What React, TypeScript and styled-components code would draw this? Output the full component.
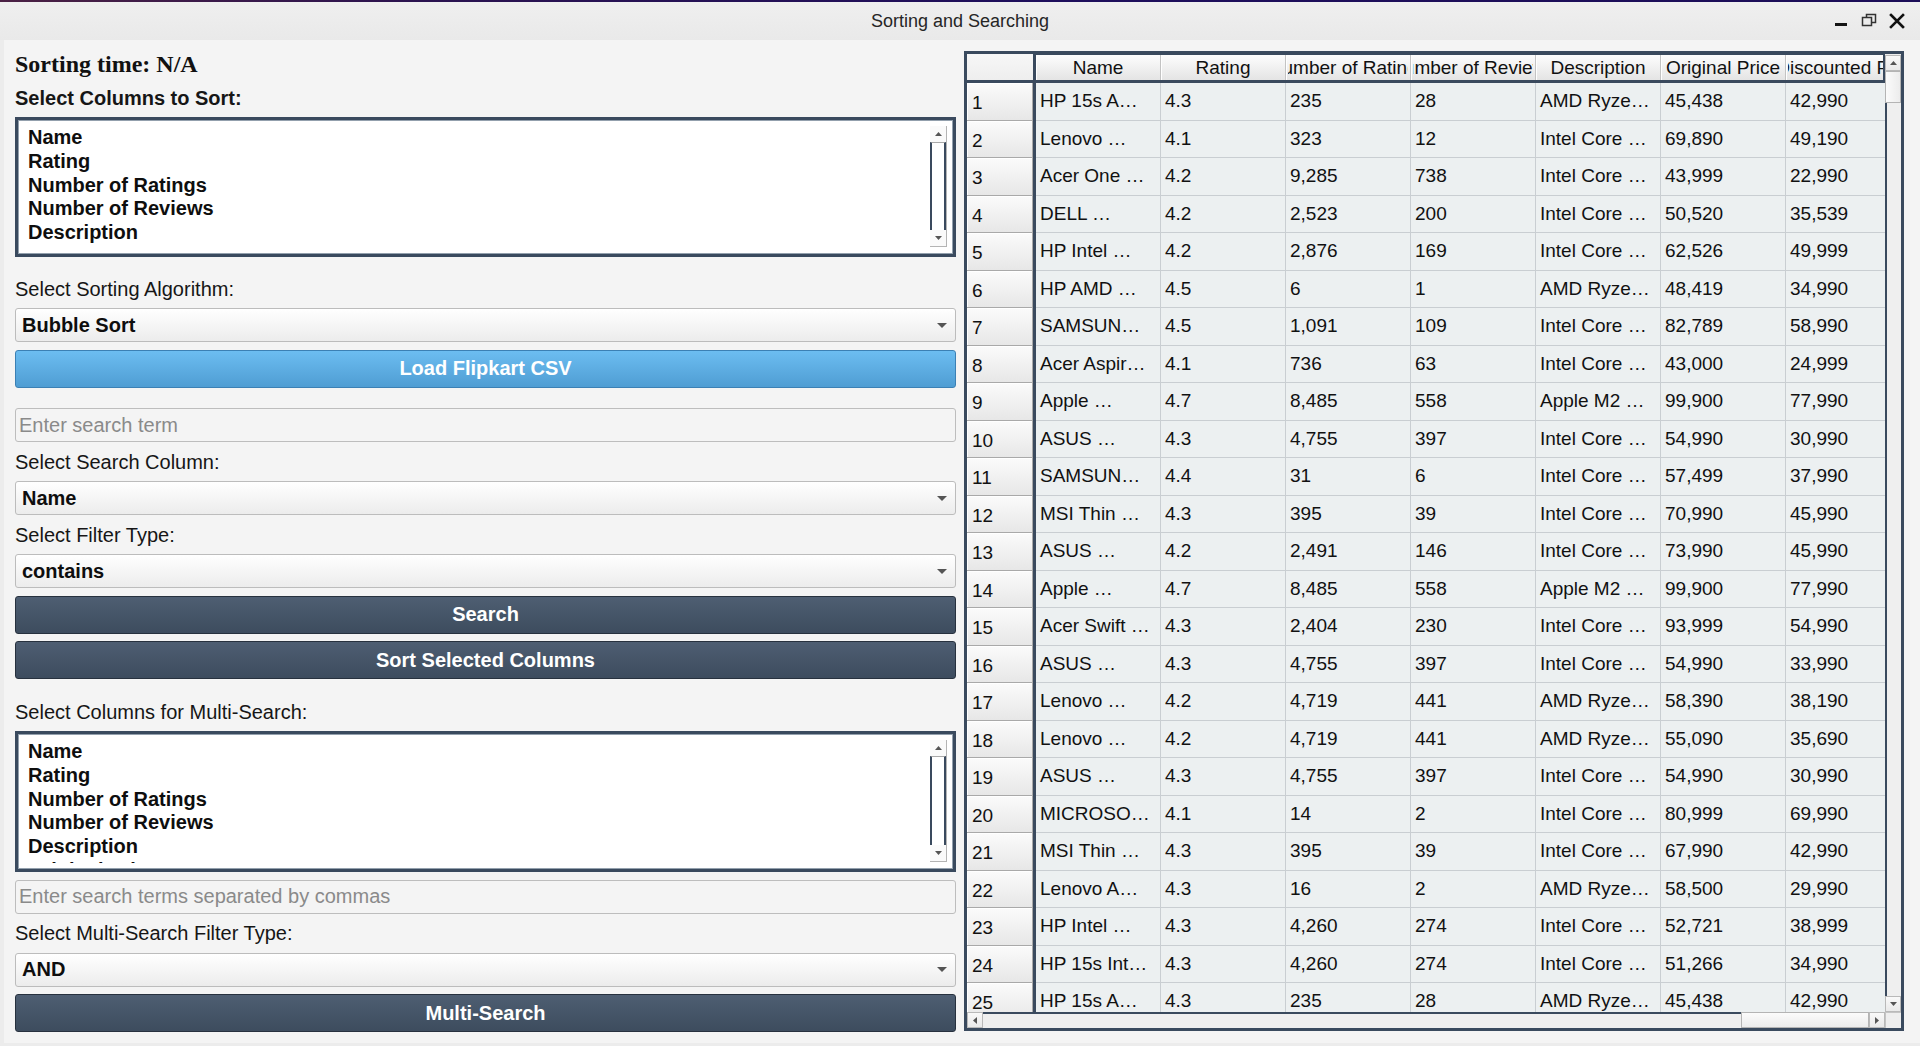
import React from 'react';
import styled, { createGlobalStyle } from 'styled-components';

const DARK = '#3a4a5e';
const SANS = '"Liberation Sans", Arial, Helvetica, sans-serif';

const GlobalStyle = createGlobalStyle`
  html, body { margin: 0; padding: 0; }
  body { background: #f4f4f4; font-family: ${SANS}; color: #111; }
  *, *::before, *::after { box-sizing: border-box; }
`;

const Window = styled.div`
  width: 1920px;
  height: 1046px;
  display: flex;
  flex-direction: column;
  background: #f4f4f4;
  overflow: hidden;
`;

const Accent = styled.div`
  height: 2px;
  flex: none;
  background: linear-gradient(90deg, #4b2144 0%, #2b1350 22%, #1e0f5c 55%, #1c0e58 100%);
`;

const TitleBar = styled.header`
  height: 38px;
  flex: none;
  display: grid;
  grid-template-columns: 1fr auto 1fr;
  align-items: center;
  background: linear-gradient(#efefef, #e9e9e9);
`;

const Title = styled.div`
  grid-column: 2;
  font-size: 18px;
  color: #262626;
`;

const Controls = styled.div`
  justify-self: end;
  display: flex;
  align-items: center;
  gap: 12px;
  padding-right: 15px;
`;

const Body = styled.div`
  flex: 1;
  display: flex;
  gap: 8px;
  padding: 0 16px 0 11px;
  border-left: 4px solid #ececec;
  border-bottom: 3px solid #ececec;
`;

const LeftPanel = styled.section`
  width: 941px;
  flex: none;
  display: flex;
  flex-direction: column;
  gap: 7.5px;
  padding-top: 10px;
`;

const SortTime = styled.div`
  font-family: "Liberation Serif", "Times New Roman", serif;
  font-weight: 700;
  font-size: 24px;
  line-height: 28px;
  color: #111;
`;

const Label = styled.div<{ $bold?: boolean; $spaced?: number }>`
  font-size: 20px;
  line-height: 24px;
  font-weight: ${(p) => (p.$bold ? 700 : 400)};
  color: #161616;
  margin-top: ${(p) => p.$spaced ?? 0}px;
`;

const ListBox = styled.div<{ $height: number }>`
  height: ${(p) => p.$height}px;
  flex: none;
  display: flex;
  border: 3px solid ${DARK};
  box-shadow: inset 0 0 0 1px #93a0ad;
  background: #fff;
  padding: 6px 5px 6px 10px;
`;

const ListViewport = styled.div`
  flex: 1;
  overflow: hidden;
`;

const ListItem = styled.div`
  font-size: 20px;
  line-height: 23.75px;
  font-weight: 700;
  color: #0e0e0e;
  white-space: nowrap;
`;

const VScrollSmall = styled.div`
  width: 17px;
  flex: none;
  display: flex;
  flex-direction: column;
  margin: 0 1px 1px 0;
  border-right: 1px solid #b4b4b4;
  border-bottom: 1px solid #b4b4b4;
`;

const SmallArrow = styled.div`
  height: 16px;
  flex: none;
  display: flex;
  align-items: center;
  justify-content: center;
  background: #fafafa;
`;

const SmallTrack = styled.div`
  flex: 1;
  background: #fff;
  border-top: 1px solid #a9a9a9;
  border-left: 2px solid ${DARK};
  border-right: 2px solid ${DARK};
`;

const Combo = styled.div`
  height: 34px;
  flex: none;
  display: flex;
  align-items: center;
  justify-content: space-between;
  padding: 0 8px 0 6px;
  border: 1px solid #bcbcbc;
  border-radius: 3px;
  background: linear-gradient(#ffffff, #ececec);
  font-size: 20px;
  font-weight: 700;
  color: #0e0e0e;
`;

const Button = styled.button<{ $variant: 'primary' | 'dark' }>`
  height: 38px;
  flex: none;
  display: flex;
  align-items: center;
  justify-content: center;
  border-radius: 3px;
  font-family: ${SANS};
  font-size: 20px;
  font-weight: 700;
  color: #fff;
  padding: 0;
  cursor: pointer;
  border: 1px solid ${(p) => (p.$variant === 'primary' ? '#3b80b4' : '#27313e')};
  background: ${(p) =>
    p.$variant === 'primary'
      ? 'linear-gradient(#6cbdf1, #4f9dd3)'
      : 'linear-gradient(#4e5e72, #3d4c5e)'};
`;

const Input = styled.input<{ $spaced?: number }>`
  height: 34px;
  flex: none;
  width: 100%;
  border: 1px solid #bdbdbd;
  border-radius: 3px;
  background: #f4f4f4;
  padding: 0 3px;
  font-family: ${SANS};
  font-size: 20px;
  color: #111;
  outline: none;
  margin-top: ${(p) => p.$spaced ?? 0}px;
  &::placeholder { color: #8a8a8a; }
`;

/* ---------- table ---------- */

const TableFrame = styled.section`
  width: 940px;
  height: 980px;
  flex: none;
  margin-top: 11px;
  border: 3px solid ${DARK};
  display: grid;
  grid-template-columns: 1fr 16px;
  grid-template-rows: 1fr 16px;
  background: #eef0f1;
`;

const TableArea = styled.div`
  display: grid;
  grid-template-columns: 66px 1fr;
  grid-template-rows: 26px 1fr;
  gap: 3px;
  background: ${DARK};
  overflow: hidden;
`;

const CornerHead = styled.div`
  background: linear-gradient(#f7f7f7, #eeeeee);
`;

const HeaderViewport = styled.div`
  display: flex;
  align-items: flex-end;
  overflow: hidden;
  margin-right: 2px;
  background: ${DARK};
`;

const HeadCell = styled.div`
  width: 125px;
  height: 25px;
  flex: none;
  display: flex;
  padding: 0 2px;
  border-right: 1px solid #c3c3c3;
  box-shadow: inset 1px 0 0 #ffffff;
  background: linear-gradient(#fdfdfd, #e4e4e4);
`;

const HeadClip = styled.div`
  flex: 1;
  display: flex;
  justify-content: center;
  align-items: center;
  overflow: hidden;
  font-size: 19px;
  color: #111;
`;

const HeadText = styled.span`
  flex: none;
  white-space: nowrap;
`;

const RowHeads = styled.div`
  display: flex;
  flex-direction: column;
  overflow: hidden;
  background: #f1f1f1;
`;

const RowHead = styled.div`
  height: 37.5px;
  flex: none;
  display: flex;
  align-items: center;
  padding: 4px 0 0 5px;
  border-right: 1px solid #a9a9a9;
  border-bottom: 1px solid #a9a9a9;
  box-shadow: inset 1px 1px 0 #ffffff;
  background: linear-gradient(#fbfbfb, #e7e7e7);
  font-size: 19px;
  color: #111;
`;

const DataViewport = styled.div`
  overflow: hidden;
  background: #ecf0f1;
`;

const DataRow = styled.div`
  display: flex;
  height: 37.5px;
`;

const DataCell = styled.div`
  width: 125px;
  flex: none;
  display: flex;
  align-items: center;
  padding: 0 4px;
  border-right: 1px solid #c9ced2;
  border-bottom: 1px solid #c9ced2;
  background: #ecf0f1;
  font-size: 19px;
  color: #111;
  white-space: nowrap;
  overflow: hidden;
`;

const VScroll = styled.div`
  display: flex;
  flex-direction: column;
  padding-top: 1px;
  background: #eeeeee;
`;

const HScroll = styled.div`
  display: flex;
  background: #eeeeee;
`;

const ArrowBox = styled.div`
  flex: none;
  display: flex;
  align-items: center;
  justify-content: center;
  width: 16px;
  height: 16px;
  background: linear-gradient(#f9f9f9, #e9e9e9);
  border: 1px solid #b9b9b9;
`;

const Thumb = styled.div<{ $vertical?: boolean; $len: number }>`
  flex: none;
  ${(p) => (p.$vertical ? `height: ${p.$len}px;` : `width: ${p.$len}px;`)}
  background: linear-gradient(${(p) => (p.$vertical ? '90deg' : '180deg')}, #fbfbfb, #ececec);
  border: 1px solid #b4b4b4;
`;

const Trough = styled.div<{ $vertical?: boolean }>`
  flex: 1;
  background: #efefef;
  ${(p) => (p.$vertical ? `border-left: 2px solid ${DARK};` : `border-top: 2px solid ${DARK};`)}
`;

const ScrollCorner = styled.div`
  background: #eeeeee;
  border-left: 1px solid #c4c4c4;
  border-top: 1px solid #c4c4c4;
`;

/* ---------- icons ---------- */

const Tri = ({ dir, w = 7, h = 4 }: { dir: 'up' | 'down' | 'left' | 'right'; w?: number; h?: number }) => {
  const horizontal = dir === 'left' || dir === 'right';
  const W = horizontal ? h : w;
  const H = horizontal ? w : h;
  let pts = '';
  if (dir === 'up') pts = `0,${H} ${W},${H} ${W / 2},0`;
  if (dir === 'down') pts = `0,0 ${W},0 ${W / 2},${H}`;
  if (dir === 'left') pts = `${W},0 ${W},${H} 0,${H / 2}`;
  if (dir === 'right') pts = `0,0 0,${H} ${W},${H / 2}`;
  return (
    <svg width={W} height={H} viewBox={`0 0 ${W} ${H}`}>
      <polygon points={pts} fill="#555" />
    </svg>
  );
};

const MinIcon = () => (
  <svg width="16" height="16" viewBox="0 0 16 16">
    <rect x="2" y="10" width="12" height="3" fill="#141414" />
  </svg>
);

const RestoreIcon = () => (
  <svg width="16" height="16" viewBox="0 0 16 16">
    <rect x="5.5" y="1.5" width="9" height="8" fill="none" stroke="#333" strokeWidth="1.5" />
    <rect x="1.5" y="4.5" width="9" height="8" fill="#ececec" stroke="#333" strokeWidth="1.5" />
  </svg>
);

const CloseIcon = () => (
  <svg width="16" height="16" viewBox="0 0 16 16">
    <path d="M2 2 L14 14 M14 2 L2 14" stroke="#111" strokeWidth="2.6" strokeLinecap="square" />
  </svg>
);

/* ---------- data ---------- */

const COLUMNS = ['Name', 'Rating', 'Number of Ratings', 'Number of Reviews', 'Description', 'Original Price', 'Discounted Price'];

const ROWS: string[][] = [
  ['HP 15s A…', '4.3', '235', '28', 'AMD Ryze…', '45,438', '42,990'],
  ['Lenovo …', '4.1', '323', '12', 'Intel Core …', '69,890', '49,190'],
  ['Acer One …', '4.2', '9,285', '738', 'Intel Core …', '43,999', '22,990'],
  ['DELL …', '4.2', '2,523', '200', 'Intel Core …', '50,520', '35,539'],
  ['HP Intel …', '4.2', '2,876', '169', 'Intel Core …', '62,526', '49,999'],
  ['HP AMD …', '4.5', '6', '1', 'AMD Ryze…', '48,419', '34,990'],
  ['SAMSUN…', '4.5', '1,091', '109', 'Intel Core …', '82,789', '58,990'],
  ['Acer Aspir…', '4.1', '736', '63', 'Intel Core …', '43,000', '24,999'],
  ['Apple …', '4.7', '8,485', '558', 'Apple M2 …', '99,900', '77,990'],
  ['ASUS …', '4.3', '4,755', '397', 'Intel Core …', '54,990', '30,990'],
  ['SAMSUN…', '4.4', '31', '6', 'Intel Core …', '57,499', '37,990'],
  ['MSI Thin …', '4.3', '395', '39', 'Intel Core …', '70,990', '45,990'],
  ['ASUS …', '4.2', '2,491', '146', 'Intel Core …', '73,990', '45,990'],
  ['Apple …', '4.7', '8,485', '558', 'Apple M2 …', '99,900', '77,990'],
  ['Acer Swift …', '4.3', '2,404', '230', 'Intel Core …', '93,999', '54,990'],
  ['ASUS …', '4.3', '4,755', '397', 'Intel Core …', '54,990', '33,990'],
  ['Lenovo …', '4.2', '4,719', '441', 'AMD Ryze…', '58,390', '38,190'],
  ['Lenovo …', '4.2', '4,719', '441', 'AMD Ryze…', '55,090', '35,690'],
  ['ASUS …', '4.3', '4,755', '397', 'Intel Core …', '54,990', '30,990'],
  ['MICROSO…', '4.1', '14', '2', 'Intel Core …', '80,999', '69,990'],
  ['MSI Thin …', '4.3', '395', '39', 'Intel Core …', '67,990', '42,990'],
  ['Lenovo A…', '4.3', '16', '2', 'AMD Ryze…', '58,500', '29,990'],
  ['HP Intel …', '4.3', '4,260', '274', 'Intel Core …', '52,721', '38,999'],
  ['HP 15s Int…', '4.3', '4,260', '274', 'Intel Core …', '51,266', '34,990'],
  ['HP 15s A…', '4.3', '235', '28', 'AMD Ryze…', '45,438', '42,990'],
];

const ColumnList = ({ height }: { height: number }) => (
  <ListBox $height={height}>
    <ListViewport>
      {COLUMNS.map((c) => (
        <ListItem key={c}>{c}</ListItem>
      ))}
    </ListViewport>
    <VScrollSmall>
      <SmallArrow>
        <Tri dir="up" />
      </SmallArrow>
      <SmallTrack />
      <SmallArrow>
        <Tri dir="down" />
      </SmallArrow>
    </VScrollSmall>
  </ListBox>
);

const Select = ({ value }: { value: string }) => (
  <Combo>
    <span>{value}</span>
    <Tri dir="down" w={10} h={5} />
  </Combo>
);

export default function App() {
  return (
    <>
      <GlobalStyle />
      <Window>
        <Accent />
        <TitleBar>
          <Title>Sorting and Searching</Title>
          <Controls>
            <MinIcon />
            <RestoreIcon />
            <CloseIcon />
          </Controls>
        </TitleBar>
        <Body>
          <LeftPanel>
            <SortTime>Sorting time: N/A</SortTime>
            <Label $bold>Select Columns to Sort:</Label>
            <ColumnList height={140} />
            <Label $spaced={12}>Select Sorting Algorithm:</Label>
            <Select value="Bubble Sort" />
            <Button $variant="primary">Load Flipkart CSV</Button>
            <Input $spaced={13} placeholder="Enter search term" />
            <Label>Select Search Column:</Label>
            <Select value="Name" />
            <Label>Select Filter Type:</Label>
            <Select value="contains" />
            <Button $variant="dark">Search</Button>
            <Button $variant="dark">Sort Selected Columns</Button>
            <Label $spaced={13}>Select Columns for Multi-Search:</Label>
            <ColumnList height={141} />
            <Input placeholder="Enter search terms separated by commas" />
            <Label>Select Multi-Search Filter Type:</Label>
            <Select value="AND" />
            <Button $variant="dark">Multi-Search</Button>
          </LeftPanel>

          <TableFrame>
            <TableArea>
              <CornerHead />
              <HeaderViewport>
                {COLUMNS.map((c) => (
                  <HeadCell key={c}>
                    <HeadClip>
                      <HeadText>{c}</HeadText>
                    </HeadClip>
                  </HeadCell>
                ))}
              </HeaderViewport>
              <RowHeads>
                {ROWS.map((_, i) => (
                  <RowHead key={i}>{i + 1}</RowHead>
                ))}
              </RowHeads>
              <DataViewport>
                {ROWS.map((r, i) => (
                  <DataRow key={i}>
                    {r.map((v, j) => (
                      <DataCell key={j}>{v}</DataCell>
                    ))}
                  </DataRow>
                ))}
              </DataViewport>
            </TableArea>
            <VScroll>
              <ArrowBox>
                <Tri dir="up" />
              </ArrowBox>
              <Thumb $vertical $len={32} />
              <Trough $vertical />
              <ArrowBox>
                <Tri dir="down" />
              </ArrowBox>
            </VScroll>
            <HScroll>
              <ArrowBox>
                <Tri dir="left" />
              </ArrowBox>
              <Trough />
              <Thumb $len={128} />
              <ArrowBox>
                <Tri dir="right" />
              </ArrowBox>
            </HScroll>
            <ScrollCorner />
          </TableFrame>
        </Body>
      </Window>
    </>
  );
}
